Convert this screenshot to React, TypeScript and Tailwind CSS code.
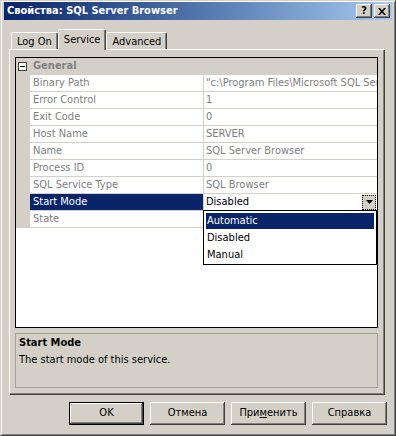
import type { ReactNode } from "react";

const ROWS: [string, string][] = [
  ["Binary Path", "\"c:\\Program Files\\Microsoft SQL Server\\90\\Shared\\sqlbrowser.exe\""],
  ["Error Control", "1"],
  ["Exit Code", "0"],
  ["Host Name", "SERVER"],
  ["Name", "SQL Server Browser"],
  ["Process ID", "0"],
  ["SQL Service Type", "SQL Browser"],
  ["Start Mode", "Disabled"],
  ["State", ""],
];

const raised =
  "shadow-[inset_-1px_-1px_0_#404040,inset_1px_1px_0_#ffffff,inset_-2px_-2px_0_#808080,inset_2px_2px_0_#d4d0c8]";

function Button({ children, isDefault }: { children: ReactNode; isDefault?: boolean }) {
  return (
    <div
      className={`flex h-[23px] w-[75px] items-center justify-center bg-[#d4d0c8] text-black ${
        isDefault ? "border border-black" : ""
      }`}
    >
      <div className={`flex h-full w-full items-center justify-center ${raised}`}>{children}</div>
    </div>
  );
}

function Tab({ label, active }: { label: string; active?: boolean }) {
  return (
    <div
      className={`flex items-start rounded-t-[2px] border-l border-t border-white bg-[#d4d0c8] px-[5px] text-black shadow-[inset_-1px_0_0_#808080] ${
        active
          ? "relative z-10 -mb-px h-[21px] border-r border-r-[#404040] pt-[2px]"
          : "h-[17px] border-r border-r-[#404040] pt-px"
      }`}
    >
      {label}
    </div>
  );
}

function PropertyRow({ label, value, selected }: { label: string; value: string; selected?: boolean }) {
  return (
    <div className="flex h-[17px]">
      <div className="w-[14px] shrink-0 bg-[#d4d0c8]" />
      <div className="flex min-w-0 flex-1 border-b border-[#d4d0c8]">
        <div
          className={`w-[174px] shrink-0 border-r border-[#d4d0c8] pl-[3px] leading-[16px] ${
            selected ? "bg-[#0a246a] text-white" : "text-[#808080]"
          }`}
        >
          {label}
        </div>
        <div
          className={`flex min-w-0 flex-1 items-center pl-[2px] leading-[16px] ${
            selected ? "text-black" : "text-[#808080]"
          }`}
        >
          <span className="flex-1 overflow-hidden whitespace-nowrap">{value}</span>
          {selected && (
            <div className="mr-px flex h-[15px] w-[14px] items-center justify-center border border-dotted border-black bg-[#d4d0c8]">
              <svg width="7" height="4" viewBox="0 0 7 4">
                <path d="M0 0h7L3.5 4z" fill="#000" />
              </svg>
            </div>
          )}
        </div>
      </div>
    </div>
  );
}

export default function App() {
  return (
    <div className="h-[436px] w-[396px] overflow-hidden border border-[#d4d0c8] border-b-[#404040] border-r-[#404040] bg-[#d4d0c8] font-['DejaVu_Sans_Condensed','DejaVu_Sans','Liberation_Sans',sans-serif] text-[11px] text-black">
      <div className="flex h-full flex-col border border-white border-b-[#808080] border-r-[#808080] px-[2px]">
        {/* title bar */}
        <div className="flex h-[18px] shrink-0 items-center bg-gradient-to-r from-[#0a246a] to-[#a6caf0] pl-[3px] pr-[2px]">
          <span className="flex-1 font-bold text-white">Свойства: SQL Server Browser</span>
          <div className={`flex h-[14px] w-[16px] items-center justify-center bg-[#d4d0c8] font-bold ${raised}`}>
            ?
          </div>
          <div className={`ml-[2px] flex h-[14px] w-[16px] items-center justify-center bg-[#d4d0c8] ${raised}`}>
            <svg width="8" height="7" viewBox="0 0 8 7">
              <path d="M0 0h2l2 2.5L6 0h2L5 3.5 8 7H6L4 4.5 2 7H0l3-3.5z" fill="#000" />
            </svg>
          </div>
        </div>

        <div className="flex flex-1 flex-col pl-[5px] pt-[9px]">
          {/* tabs */}
          <div className="flex h-[20px] items-end pl-[2px]">
            <Tab label="Log On" />
            <Tab label="Service" active />
            <Tab label="Advanced" />
          </div>

          {/* panel */}
          <div className="flex h-[346px] w-[376px] flex-col border-l border-t border-white px-[5px] pt-[7px] shadow-[inset_-1px_-1px_0_#404040,inset_-2px_-2px_0_#808080]">
            <div className="relative h-[271px] w-[363px] shrink-0 border border-black bg-white">
              <div className="flex h-[17px] items-center bg-[#d4d0c8]">
                <div className="ml-[2px] flex h-[9px] w-[9px] items-center justify-center border border-[#404040] bg-white">
                  <div className="h-px w-[5px] bg-black" />
                </div>
                <span className="ml-[6px] font-bold text-[#808080]">General</span>
              </div>
              {ROWS.map(([label, value]) => (
                <PropertyRow key={label} label={label} value={value} selected={label === "Start Mode"} />
              ))}

              {/* open dropdown */}
              <div className="absolute left-[187px] top-[152px] w-[174px] border border-black bg-white pl-[2px] pr-[2px] pt-[2px] pb-px">
                <div className="h-[16px] bg-[#0a246a] pl-px leading-[16px] text-white">Automatic</div>
                <div className="h-[17px] pl-px leading-[17px]">Disabled</div>
                <div className="h-[17px] pl-px leading-[17px]">Manual</div>
              </div>
            </div>

            <div className="mt-[5px] h-[55px] w-[363px] shrink-0 border border-[#a0a0a0] px-[3px] pt-[2px]">
              <div className="font-bold leading-[14px]">Start Mode</div>
              <div className="mt-[3px] leading-[14px]">The start mode of this service.</div>
            </div>
          </div>

          {/* buttons */}
          <div className="mt-[7px] flex justify-end gap-[6px] pr-[5px]">
            <Button isDefault>OK</Button>
            <Button>Отмена</Button>
            <Button>
              <span>
                При<span className="underline">м</span>енить
              </span>
            </Button>
            <Button>Справка</Button>
          </div>
        </div>
      </div>
    </div>
  );
}
